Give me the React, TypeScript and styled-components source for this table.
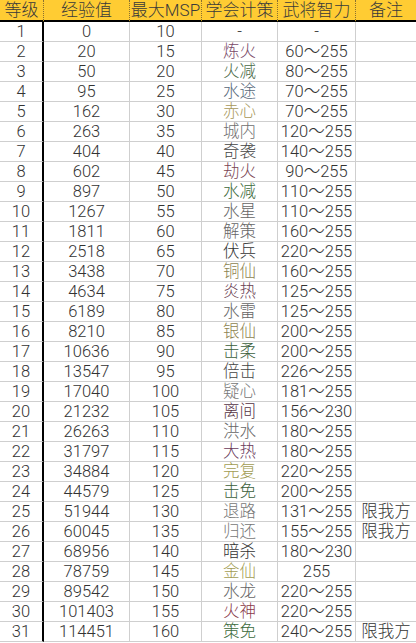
import React from "react"
import styled, { createGlobalStyle } from "styled-components"

const GlobalStyle = createGlobalStyle`
  html, body {
    margin: 0;
    padding: 0;
    background: #fff;
  }
`

type Row = [number, number, number, string, string, string, string?]

// level, exp, max msp, skill, skill colour, intellect range, note
const rows: Row[] = [
  [1, 0, 10, "-", "#333", "-"],
  [2, 20, 15, "炼火", "#7a4a68", "60～255"],
  [3, 50, 20, "火减", "#4a6a48", "80～255"],
  [4, 95, 25, "水途", "#56687a", "70～255"],
  [5, 162, 30, "赤心", "#a8985a", "70～255"],
  [6, 263, 35, "城内", "#707070", "120～255"],
  [7, 404, 40, "奇袭", "#444", "140～255"],
  [8, 602, 45, "劫火", "#7a4452", "90～255"],
  [9, 897, 50, "水减", "#3c6a3c", "110～255"],
  [10, 1267, 55, "水星", "#666", "110～255"],
  [11, 1811, 60, "解策", "#666", "160～255"],
  [12, 2518, 65, "伏兵", "#333", "220～255"],
  [13, 3438, 70, "铜仙", "#8e8450", "160～255"],
  [14, 4634, 75, "炎热", "#6a4252", "125～255"],
  [15, 6189, 80, "水雷", "#666", "125～255"],
  [16, 8210, 85, "银仙", "#8e8450", "200～255"],
  [17, 10636, 90, "击柔", "#3c603c", "200～255"],
  [18, 13547, 95, "倍击", "#444", "226～255"],
  [19, 17040, 100, "疑心", "#777", "181～255"],
  [20, 21232, 105, "离间", "#553344", "156～230"],
  [21, 26263, 110, "洪水", "#666", "180～255"],
  [22, 31797, 115, "大热", "#6a3a5a", "180～255"],
  [23, 34884, 120, "完复", "#a29c52", "220～255"],
  [24, 44579, 125, "击免", "#3c603c", "200～255"],
  [25, 51944, 130, "退路", "#777", "131～255", "限我方"],
  [26, 60045, 135, "归还", "#777", "155～255", "限我方"],
  [27, 68956, 140, "暗杀", "#333", "180～230"],
  [28, 78759, 145, "金仙", "#a29c52", "255"],
  [29, 89542, 150, "水龙", "#666", "220～255"],
  [30, 101403, 155, "火神", "#8a3a4a", "220～255"],
  [31, 114451, 160, "策免", "#3c6a3c", "240～255", "限我方"],
]

const headers = ["等级", "经验值", "最大MSP", "学会计策", "武将智力", "备注"]
const widths = [44, 86, 72, 76, 78, 60]

export default function App() {
  return (
    <>
      <GlobalStyle />
      <Table>
        <colgroup>
          {widths.map((w, i) => (
            <col key={i} style={{ width: w }} />
          ))}
        </colgroup>
        <thead>
          <tr>
            {headers.map((h, i) => (
              <HeadCell key={h} last={i === headers.length - 1}>
                {h}
              </HeadCell>
            ))}
          </tr>
        </thead>
        <tbody>
          {rows.map(([lv, exp, msp, skill, tone, range, note]) => (
            <tr key={lv}>
              <LevelCell>{lv}</LevelCell>
              <Cell>{exp}</Cell>
              <Cell>{msp}</Cell>
              <Cell tone={tone}>{skill}</Cell>
              <Cell>{range}</Cell>
              <Cell last>{note}</Cell>
            </tr>
          ))}
        </tbody>
      </Table>
    </>
  )
}

const Table = styled.table`
  width: 416px;
  table-layout: fixed;
  border-collapse: separate;
  border-spacing: 0;
  font-family: Roboto, "Noto Sans CJK SC", sans-serif;
  font-weight: 300;
  font-size: 16.5px;
  color: #333;
`

const HeadCell = styled.th<{ last?: boolean }>`
  height: 20px;
  padding: 0;
  background: #ffcc33;
  font-weight: 300;
  font-size: 17px;
  text-align: center;
  vertical-align: middle;
  line-height: 20px;
  white-space: nowrap;
  overflow: hidden;
  color: #3a3a3a;
  border-bottom: 2px solid #000;
  border-right: ${p => (p.last ? "none" : "1px dotted #8a7030")};
`

const Cell = styled.td<{ tone?: string; last?: boolean }>`
  height: 19px;
  padding: 0;
  text-align: center;
  vertical-align: middle;
  line-height: 19px;
  white-space: nowrap;
  overflow: hidden;
  color: ${p => p.tone || "#333"};
  border-bottom: 1px solid #cfcfcf;
  border-right: ${p => (p.last ? "none" : "1px solid #cfcfcf")};
`

const LevelCell = styled(Cell)`
  border-right: 2px solid #000;
`
